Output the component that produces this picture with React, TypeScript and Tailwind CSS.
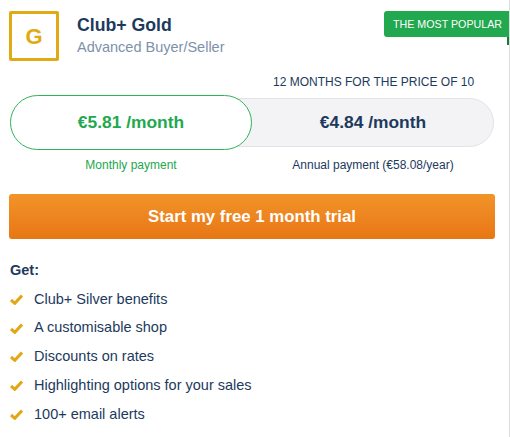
import React from 'react';

const benefits = [
  'Club+ Silver benefits',
  'A customisable shop',
  'Discounts on rates',
  'Highlighting options for your sales',
  '100+ email alerts',
];

const Check: React.FC = () => (
  <svg width="13" height="11" viewBox="0 0 13 11" className="shrink-0">
    <path d="M1 6 L4.8 9.3 L12 1.5" fill="none" stroke="#e3a614" strokeWidth="3" strokeLinejoin="miter" />
  </svg>
);

const App: React.FC = () => {
  return (
    <div className="w-[510px] h-[437px] bg-white overflow-hidden font-['Liberation_Sans',Arial,sans-serif]">
      <div className="relative h-full border-r border-[#dcdcdc] pl-[9px] pr-[15px]">
        {/* Ribbon badge */}
        <div className="absolute right-0 top-[11px] flex flex-col items-end">
          <div className="h-[26px] w-[125px] rounded-l-[3px] bg-[#22a84e] text-white text-[10.7px] flex items-center justify-center pl-[2px]">
            THE MOST POPULAR
          </div>
          <div className="h-[8px] w-[2px] bg-[#177a37]"></div>
        </div>

        {/* Header */}
        <div className="flex items-center pt-[11px]">
          <div className="w-[50px] h-[50px] border-[3px] border-[#e0aa12] rounded-[2px] flex items-center justify-center text-[#e0aa12] text-[22px] font-bold">
            G
          </div>
          <div className="ml-[18px] -mt-[1px]">
            <div className="text-[17.7px] font-bold text-[#1c3a5d] leading-[20px]">Club+ Gold</div>
            <div className="text-[14.5px] text-[#7d91ab] leading-[18px] mt-[3px]">Advanced Buyer/Seller</div>
          </div>
        </div>

        <div className="mt-[14px] text-[12px] text-[#1c3a5d] leading-[14px] pl-[264px]">
          12 MONTHS FOR THE PRICE OF 10
        </div>

        {/* Toggle */}
        <div className="mt-[6px] flex items-center pl-[1px]">
          <button className="relative z-10 w-[242px] h-[55px] rounded-full border border-[#2eb35a] bg-white text-[17.4px] font-bold text-[#22a84e]">
            €5.81 /month
          </button>
          <button className="-ml-[14px] h-[49px] w-[256px] rounded-r-full border border-[#e2e2e8] bg-[#f3f3f5] pl-[14px] text-[17.4px] font-bold text-[#1c3a5d]">
            €4.84 /month
          </button>
        </div>
        <div className="flex mt-[8px] text-[12px] leading-[14px] pl-[1px]">
          <div className="w-[242px] text-center text-[#22a84e]">Monthly payment</div>
          <div className="w-[242px] text-center text-[#1c3a5d]">Annual payment (€58.08/year)</div>
        </div>

        {/* CTA */}
        <button className="mt-[22px] w-[486px] h-[45px] rounded-[3px] bg-gradient-to-b from-[#f29429] to-[#e87615] text-white text-[16.8px] font-bold">
          Start my free 1 month trial
        </button>

        {/* Benefits */}
        <div className="mt-[23px] pl-[1px] text-[14.5px] font-bold text-[#1c3a5d] leading-[16px]">Get:</div>
        <ul className="mt-[7px] pl-[1px]">
          {benefits.map(b => (
            <li key={b} className="flex items-center h-[28.75px] text-[14.5px] text-[#1c3a5d]">
              <Check />
              <span className="ml-[11px]">{b}</span>
            </li>
          ))}
        </ul>
      </div>
    </div>
  );
};

export default App;
